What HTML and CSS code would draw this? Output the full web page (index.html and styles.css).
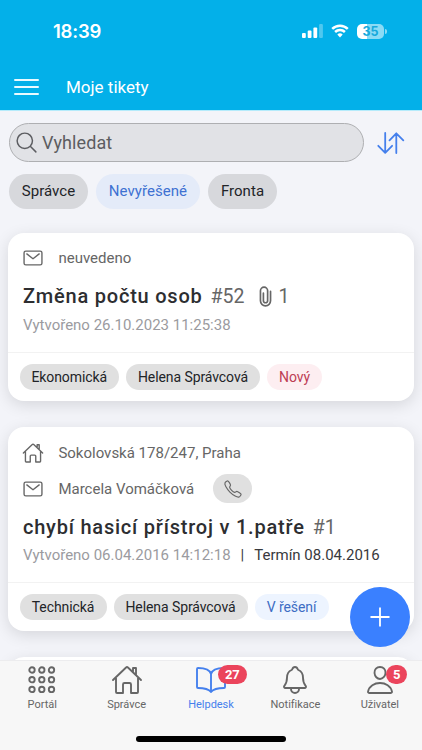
FILE: index.html
```html
<!DOCTYPE html>
<html lang="cs">
<head>
<meta charset="utf-8">
<title>Moje tikety</title>
<link rel="stylesheet" href="styles.css">
</head>
<body>
<svg class="defs" aria-hidden="true">
  <symbol id="home" viewBox="0 0 512 512"><path d="M80 212v236a16 16 0 0016 16h96V328a24 24 0 0124-24h80a24 24 0 0124 24v136h96a16 16 0 0016-16V212M480 256L266.9 52c-5-5.3-16.7-5.3-21.8 0L32 256M400 179V64h-48v69"/></symbol>
  <symbol id="mail" viewBox="0 0 512 512"><rect x="48" y="96" width="416" height="320" rx="40"/><path d="M112 160l144 112 144-112"/></symbol>
</svg>
<div class="app">
  <header class="header">
    <div class="status">
      <span class="time">18:39</span>
      <div class="indicators">
        <svg class="signal" viewBox="0 0 21 14"><rect x="0" y="9" width="3.8" height="5" rx="1"/><rect x="5.7" y="6.5" width="3.8" height="7.5" rx="1"/><rect x="11.4" y="3.5" width="3.8" height="10.5" rx="1"/><rect x="17.1" y="0" width="3.8" height="14" rx="1" opacity=".3"/></svg>
        <svg class="wifi" viewBox="0 0 18 14"><path d="M1.2 4.8a11.2 11.2 0 0 1 15.6 0M4.1 8a7 7 0 0 1 9.8 0"/><path class="dot" d="M9 13.4l2.7-2.8a3.9 3.9 0 0 0-5.4 0z"/></svg>
        <div class="battery"><span class="level">35</span><i class="cap"></i></div>
      </div>
    </div>
    <div class="toolbar">
      <div class="menu"><i></i><i></i><i></i></div>
      <h1 class="title">Moje tikety</h1>
    </div>
  </header>
  <main class="content">
    <div class="search-row">
      <div class="search">
        <svg class="icon search-icon" viewBox="0 0 512 512"><path d="M221.1 64a157.1 157.1 0 10157.1 157.1A157.1 157.1 0 00221.1 64zM338.3 338.3L448 448"/></svg>
        <span>Vyhledat</span>
      </div>
      <svg class="sort" viewBox="0 0 28 22"><path d="M8.2 1v19.5M1.3 13.8l6.9 7 6.9-7M19.3 21V1.5M12.5 8.3l6.8-7 7 7"/></svg>
    </div>
    <div class="filters">
      <span class="filter f1">Správce</span><span class="filter f2 active">Nevyřešené</span><span class="filter f3">Fronta</span>
    </div>
    <article class="card">
      <div class="body first">
        <div class="meta"><svg class="icon"><use href="#mail"/></svg><span>neuvedeno</span></div>
        <h2 class="subject"><b>Změna počtu osob</b><span class="num">#52</span><svg class="icon clip" viewBox="0 0 512 512"><path d="M216.1 192v143.9a40.1 40.1 0 0080.1 0l.2-188.6a67.9 67.9 0 10-135.9 0v189.8a95.5 95.5 0 10191 0V159.7"/></svg><span class="num">1</span></h2>
        <div class="dates"><span>Vytvořeno 26.10.2023 11:25:38</span></div>
      </div>
      <div class="tags"><span class="tag w99">Ekonomická</span><span class="tag w134">Helena Správcová</span><span class="tag w55 red">Nový</span></div>
    </article>
    <article class="card">
      <div class="body second">
        <div class="meta"><svg class="icon"><use href="#home"/></svg><span>Sokolovská 178/247, Praha</span></div>
        <div class="meta person"><svg class="icon"><use href="#mail"/></svg><span>Marcela Vomáčková</span>
          <div class="call"><svg class="icon" viewBox="0 0 512 512"><path d="M451 374c-15.9-16-54.3-39.4-73-48.8-24.3-12.2-26.3-13.2-45.4 1-12.7 9.5-21.2 17.9-36.1 14.7s-47.3-21.1-75.7-49.4-47.3-61.6-50.5-76.5 5.4-23.2 14.8-36c13.2-18 12.2-21 .9-45.3-8.8-18.9-32.8-57-48.9-72.8C119.9 44 119.9 47 108.8 51.6A160 160 0 0083 65.4C67 76 58.1 84.8 51.9 98.1s-9 44.4 23.1 102.6 54.6 88.1 101.1 134.5S258.5 406.6 310.9 436c64.7 36.3 89.6 29.2 102.9 23s22.2-15 32.8-31a159 159 0 0013.8-25.8C465 391.2 468 391.2 451 374z"/></svg></div>
        </div>
        <h2 class="subject"><b>chybí hasicí přístroj v 1.patře</b><span class="num">#1</span></h2>
        <div class="dates"><span>Vytvořeno 06.04.2016 14:12:18</span><em>|</em><em class="due">Termín 08.04.2016</em></div>
      </div>
      <div class="tags"><span class="tag w87">Technická</span><span class="tag w134">Helena Správcová</span><span class="tag w74 blue">V řešení</span></div>
    </article>
    <article class="card next"></article>
  </main>
  <div class="fab"><svg viewBox="0 0 20 20"><path d="M10 .5v19M.5 10h19"/></svg></div>
  <nav class="tabs">
    <div class="tab"><svg class="icon grid" viewBox="0 0 28 28"><circle cx="4" cy="4" r="2.7"/><circle cx="13.8" cy="4" r="2.7"/><circle cx="23.5" cy="4" r="2.7"/><circle cx="4" cy="13.7" r="2.7"/><circle cx="13.8" cy="13.7" r="2.7"/><circle cx="23.5" cy="13.7" r="2.7"/><circle cx="4" cy="23.4" r="2.7"/><circle cx="13.8" cy="23.4" r="2.7"/><circle cx="23.5" cy="23.4" r="2.7"/></svg><span>Portál</span></div>
    <div class="tab"><svg class="icon"><use href="#home"/></svg><span>Správce</span></div>
    <div class="tab selected"><svg class="icon" viewBox="0 0 512 512"><path d="M256 160c16-63.2 76.4-95.4 208-96a16 16 0 0116 16v288a16 16 0 01-16 16c-128 0-177.5 25.8-208 64-30.4-38-80-64-208-64-9.9 0-16-8-16-17.9V80a16 16 0 0116-16c131.6.6 192 32.8 208 96zM256 160v288"/></svg><b class="badge">27</b><span>Helpdesk</span></div>
    <div class="tab"><svg class="icon" viewBox="0 0 512 512"><path d="M427.7 351.4C402 320 383.9 304 383.9 217.4 383.9 138 343.4 109.7 310 96c-4.4-1.8-8.6-6-10-10.6C294.2 65.5 277.8 48 256 48s-38.2 17.6-44 37.5c-1.4 4.6-5.5 8.7-10 10.5-33.4 13.8-73.9 41.9-73.9 121.4C128.1 304 110 320 84.3 351.4 73.7 364.5 83 384 101.6 384h308.9c18.5 0 27.8-19.6 17.2-32.6zM320 384v16a64 64 0 01-128 0v-16"/></svg><span>Notifikace</span></div>
    <div class="tab"><svg class="icon" viewBox="0 0 512 512"><path d="M344 144c-3.9 52.9-44 96-88 96s-84.2-43.1-88-96c-4-55 35-96 88-96s92 42 88 96zM256 304c-87 0-175.3 48-191.6 138.6C62.4 453.5 68.6 464 80 464h352c11.4 0 17.6-10.5 15.7-21.4C431.3 352 343 304 256 304z"/></svg><b class="badge one">5</b><span>Uživatel</span></div>
    <i class="home-bar"></i>
  </nav>
</div>
</body>
</html>
```
FILE: styles.css
```css
* { box-sizing: border-box; }
body { margin: 0; font-family: Roboto, sans-serif; color: #222428; }
.defs { position: absolute; width: 0; height: 0; }
.app { position: relative; display: flex; flex-direction: column; width: 422px; height: 750px; overflow: hidden; background: #f3f4f9; white-space: nowrap; }
svg { display: block; flex: none; }
.icon { width: 22px; height: 22px; fill: none; stroke: currentColor; stroke-width: 32; stroke-linecap: round; stroke-linejoin: round; }

.header { flex: none; height: 111px; background: #03b0e9; border-bottom: 1px solid #b5ebfb; color: #fff; }
.status { display: flex; justify-content: space-between; align-items: center; height: 62px; padding: 0 35px 0 53px; }
.time { font: 600 18.5px/22px Inter, sans-serif; letter-spacing: -.2px; }
.indicators { display: flex; align-items: center; gap: 8px; }
.signal { width: 21px; height: 14px; fill: #fff; }
.wifi { width: 18px; height: 14px; fill: none; stroke: #fff; stroke-width: 2.5; }
.wifi .dot { fill: #fff; stroke: none; }
.battery { display: flex; align-items: center; gap: 1px; }
.level { width: 27px; height: 15px; border-radius: 5px; background: linear-gradient(90deg, #fff 36%, #8bdbf5 36%); color: #16a9dc; font: 700 12.5px/15px Inter, sans-serif; text-align: center; }
.cap { width: 2px; height: 5px; border-radius: 0 2px 2px 0; background: #8bdbf5; }
.toolbar { display: flex; align-items: center; height: 49px; padding-left: 14px; gap: 27px; }
.menu { display: grid; gap: 5px; width: 25px; }
.menu i { height: 2px; background: #e9faff; border-radius: 1px; }
.title { margin: 0; font-size: 17px; font-weight: 400; line-height: 22px; }

.content { flex: 1; min-height: 0; overflow: hidden; padding: 12px 8px 0; }
.search-row { display: flex; align-items: center; gap: 13px; padding-left: 1px; height: 39px; }
.search { display: flex; align-items: center; gap: 3px; width: 355px; height: 39px; padding-left: 4px; border: 1px solid #aeafb2; border-radius: 20px; background: #e1e2e6; color: #5c5d61; font-size: 18px; letter-spacing: .1px; }
.search-icon { width: 25px; height: 25px; stroke-width: 30; }
.sort { width: 28px; height: 22px; fill: none; stroke: #447fec; stroke-width: 1.8; stroke-linecap: round; stroke-linejoin: round; }
.filters { display: flex; gap: 8px; margin: 12px 0 24px 1px; }
.filter { height: 35px; border-radius: 18px; background: #d7d8dc; text-align: center; font-size: 15px; line-height: 35px; letter-spacing: .05px; }
.f1 { width: 79px; } .f2 { width: 104px; } .f3 { width: 69px; }
.filter.active { background: #e4ebf9; color: #3e71d2; }

.card { margin-bottom: 26px; border-radius: 16px; background: #fff; box-shadow: 0 4px 16px rgba(0, 0, 0, .12); }
.body { border-bottom: 1px solid #f2f2f2; padding: 0 15px; }
.first { height: 120px; padding-top: 14px; }
.second { height: 156px; padding-top: 15px; }
.meta { display: flex; align-items: center; height: 22px; gap: 15px; color: #666; font-size: 15px; }
.meta .icon { margin: 0 -1px 0 -.6px; }
.person { height: 29px; margin-top: 10px; }
.call { display: grid; place-items: center; width: 39px; height: 29px; margin-left: 4px; border-radius: 15px; background: #e0e0e0; }
.call .icon { width: 20px; height: 20px; margin: 0; stroke-width: 30; }
.subject { display: flex; align-items: center; margin: 14px 0 0; height: 26px; font-size: 20px; font-weight: 400; color: #666; }
.second .subject { margin-top: 11px; }
.subject b { font-weight: 500; color: #2d2e31; letter-spacing: .78px; margin-right: 8px; }
.num { font-size: 19.5px; }
.clip { width: 27px; height: 27px; margin: 0 0 0 7px; }
.dates { display: flex; gap: 10px; margin-top: 7px; height: 18px; line-height: 18px; font-size: 15px; color: #9b9ba0; }
.dates em { font-style: normal; color: #38393d; }
.second .dates { margin-top: 5.5px; }
.tags { display: flex; gap: 7px; height: 48px; padding: 11px 11px 0 11.5px; }
.tag { height: 26px; border-radius: 13px; background: #e0e0e0; font-size: 14px; line-height: 26px; text-align: center; letter-spacing: -.08px; }
.w99 { width: 99.5px; } .w134 { width: 134px; } .w55 { width: 55px; } .w87 { width: 87px; } .w74 { width: 74px; }
.red { background: #fdeef1; color: #bd3d54; }
.blue { background: #edf4ff; color: #3d6dc4; }
.next { height: 100px; }

.fab { position: absolute; left: 350px; top: 587px; display: grid; place-items: center; width: 60px; height: 60px; border-radius: 50%; background: #3a80ff; }
.fab svg { width: 20px; height: 20px; fill: none; stroke: #fff; stroke-width: 1.8; }
.tabs { position: relative; flex: none; display: flex; height: 90px; border-top: 1px solid #ececee; background: #f7f7f7; color: #666; }
.tab { position: relative; flex: 1; display: flex; flex-direction: column; align-items: center; padding-top: 3px; font-size: 11px; line-height: 14px; letter-spacing: -.03px; }
.tab .icon { width: 32px; height: 32px; margin-bottom: 2px; stroke-width: 30; }
.tab .grid { width: 28px; height: 28px; margin: 2px 0 4px; stroke-width: 1.9; }
.selected { color: #4580ed; }
.badge { position: absolute; left: 49px; top: 4px; width: 29px; height: 19px; border-radius: 10px; background: #eb445c; color: #fff; font-size: 13px; line-height: 19px; text-align: center; }
.one { left: 48.5px; width: 21px; }
.home-bar { position: absolute; left: 136px; bottom: 8px; width: 150px; height: 6px; border-radius: 3px; background: #000; }
```
